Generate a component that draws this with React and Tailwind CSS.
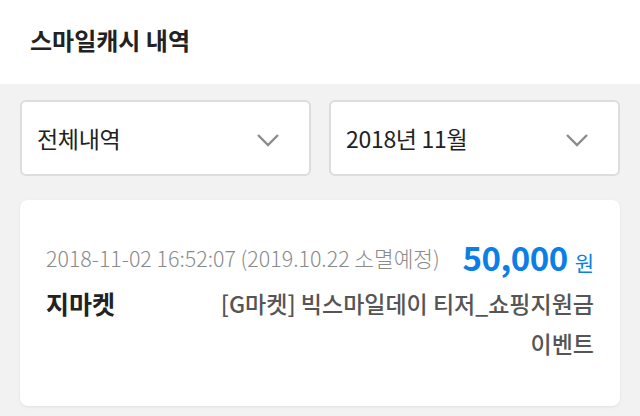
import React from 'react';

const FONT = { fontFamily: '"Noto Sans CJK KR", "Noto Sans", sans-serif' };

const Chevron = () => (
  <svg width="24" height="14" viewBox="0 0 24 14" fill="none" className="mt-[4px]">
    <path d="M2 2l10 10L22 2" stroke="#8c8c8c" strokeWidth="2.4" />
  </svg>
);

const SelectBox = ({ label }) => (
  <div className="flex-1 h-[76px] bg-white border-2 border-[#dddddd] rounded-[6px] flex items-center justify-between pl-[15px] pr-[29px]">
    <span className="text-[23px] text-[#222] tracking-[-0.3px]">{label}</span>
    <Chevron />
  </div>
);

export default function App() {
  return (
    <div style={FONT} className="w-[640px] h-[416px] bg-[#f2f2f2] overflow-hidden">
      <div className="h-[84px] bg-white flex items-center pl-[30px] pb-[4px]">
        <h1 className="text-[24px] font-bold text-[#222]">스마일캐시 내역</h1>
      </div>

      <div className="flex gap-[18px] px-[20px] pt-[16px]">
        <SelectBox label="전체내역" />
        <SelectBox label="2018년 11월" />
      </div>

      <div className="mx-[20px] mt-[24px] h-[206px] bg-white rounded-[8px] shadow-[0_1px_3px_rgba(0,0,0,0.08)] px-[26px] pt-[33px]">
        <div className="flex items-center justify-between">
          <span className="text-[21.4px] font-light text-[#8a8a8a]">2018-11-02 16:52:07 (2019.10.22 소멸예정)</span>
          <span className="flex items-baseline">
            <span className="text-[33px] font-bold text-[#0b7fe5] tracking-[-0.5px]">50,000</span>
            <span className="text-[21px] text-[#0b7fe5] ml-[7px]">원</span>
          </span>
        </div>
        <div className="flex justify-between">
          <span className="text-[25px] font-bold text-[#222] leading-[40px] whitespace-nowrap">지마켓</span>
          <span className="text-[23px] font-medium text-[#555] leading-[40px] text-right w-[390px]">
            [G마켓] 빅스마일데이 티저_쇼핑지원금 이벤트
          </span>
        </div>
      </div>
    </div>
  );
}
